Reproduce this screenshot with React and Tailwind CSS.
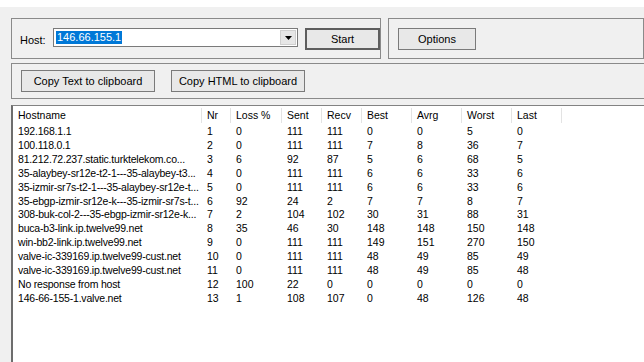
// App.jsx
const rows = [
  ['192.168.1.1', 1, 0, 111, 111, 0, 0, 5, 0],
  ['100.118.0.1', 2, 0, 111, 111, 7, 8, 36, 7],
  ['81.212.72.237.static.turktelekom.co...', 3, 6, 92, 87, 5, 6, 68, 5],
  ['35-alaybey-sr12e-t2-1---35-alaybey-t3...', 4, 0, 111, 111, 6, 6, 33, 6],
  ['35-izmir-sr7s-t2-1---35-alaybey-sr12e-t...', 5, 0, 111, 111, 6, 6, 33, 6],
  ['35-ebgp-izmir-sr12e-k---35-izmir-sr7s-t...', 6, 92, 24, 2, 7, 7, 8, 7],
  ['308-buk-col-2---35-ebgp-izmir-sr12e-k...', 7, 2, 104, 102, 30, 31, 88, 31],
  ['buca-b3-link.ip.twelve99.net', 8, 35, 46, 30, 148, 148, 150, 148],
  ['win-bb2-link.ip.twelve99.net', 9, 0, 111, 111, 149, 151, 270, 150],
  ['valve-ic-339169.ip.twelve99-cust.net', 10, 0, 111, 111, 48, 49, 85, 49],
  ['valve-ic-339169.ip.twelve99-cust.net', 11, 0, 111, 111, 48, 49, 85, 48],
  ['No response from host', 12, 100, 22, 0, 0, 0, 0, 0],
  ['146-66-155-1.valve.net', 13, 1, 108, 107, 0, 48, 126, 48],
];

const columns = [
  { label: 'Hostname', w: 'w-[189px]' },
  { label: 'Nr', w: 'w-[29px]' },
  { label: 'Loss %', w: 'w-[51px]' },
  { label: 'Sent', w: 'w-[40px]' },
  { label: 'Recv', w: 'w-[40px]' },
  { label: 'Best', w: 'w-[50px]' },
  { label: 'Avrg', w: 'w-[50px]' },
  { label: 'Worst', w: 'w-[50px]' },
  { label: 'Last', w: 'w-[50px]' },
];

const Button = ({ children, className = '' }) => (
  <div
    className={`h-[22px] flex items-center justify-center bg-[#e8e8e8] border text-black text-[11px] ${className}`}
  >
    {children}
  </div>
);

export default function App() {
  return (
    <div className="w-[644px] h-[362px] overflow-hidden bg-[#f0f0f0] text-[10.5px] text-black font-['Liberation_Sans',Arial,sans-serif] flex flex-col">
      {/* title bar remnant */}
      <div className="h-[7px] bg-white shrink-0" />

      <div className="flex flex-col pl-[11px] pt-[11px] flex-1 min-h-0">
        {/* Host + Options row */}
        <div className="flex gap-[7px] shrink-0">
          <div className="w-[377px] h-[41px] border border-[#8a8a8a] flex items-start pt-[9px] pl-[8px]">
            <span className="mt-[4px] w-[33px] text-[11px]">Host:</span>
            <div className="w-[245px] h-[19px] bg-white border border-[#7a7a7a] flex items-center pl-[2px]">
              <span className="bg-[#0078d7] text-white text-[11px] leading-[13px] px-[1px]">146.66.155.1</span>
              <div className="ml-auto w-[16px] h-[15px] mr-[1px] bg-[#e6e6e6] border border-[#cfcfcf] flex items-center justify-center">
                <svg width="7" height="4" viewBox="0 0 7 4">
                  <path d="M0 0h7L3.5 4z" fill="#000" />
                </svg>
              </div>
            </div>
            <Button className="ml-[7px] w-[75px] border-2 border-[#5e5e5e]">Start</Button>
          </div>
          <div className="w-[300px] h-[41px] border border-[#8a8a8a] pt-[9px] pl-[9px]">
            <Button className="w-[78px] border-[#7a7a7a]">Options</Button>
          </div>
        </div>

        {/* Copy row */}
        <div className="mt-[4px] w-[700px] h-[36px] border border-[#8a8a8a] flex items-start gap-[16px] pt-[6px] pl-[9px] shrink-0">
          <Button className="w-[134px] border-[#7a7a7a]">Copy Text to clipboard</Button>
          <Button className="w-[134px] border-[#7a7a7a]">Copy HTML to clipboard</Button>
        </div>

        {/* Results list */}
        <div className="mt-[6px] w-[700px] flex-1 bg-white border-t border-[#828282] border-l-2 border-l-[#6d6d6d]">
          <div className="flex h-[17px] items-center pt-[2px]">
            {columns.map((c) => (
              <div
                key={c.label}
                className={`${c.w} h-full flex items-center pl-[5px] border-r border-[#e3e3e3] shrink-0`}
              >
                {c.label}
              </div>
            ))}
          </div>
          <div className="pt-[2px]">
            {rows.map((r, i) => (
              <div key={i} className="flex h-[13.9px] items-center">
                {r.map((v, j) => (
                  <div
                    key={j}
                    className={`${columns[j].w} pl-[5px] shrink-0 whitespace-nowrap ${j === 0 ? 'tracking-[-0.2px]' : ''}`}
                  >
                    {v}
                  </div>
                ))}
              </div>
            ))}
          </div>
        </div>
      </div>
    </div>
  );
}
